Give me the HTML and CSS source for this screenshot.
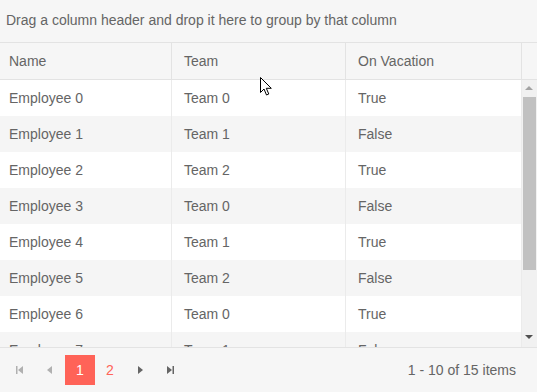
FILE: index.html
```html
<!DOCTYPE html>
<html lang="en">
<head>
  <meta charset="UTF-8">
  <title>Grid</title>
  <link rel="stylesheet" href="styles.css">
</head>
<body>
  <div class="grid">
    <div class="group-hint">Drag a column header and drop it here to group by that column</div>
    <div class="head">
      <div class="cell first">Name</div>
      <div class="cell">Team</div>
      <div class="cell">On Vacation</div>
      <div class="gutter"></div>
    </div>
    <div class="body">
      <div class="rows">
        <div class="row"><div class="cell first">Employee 0</div><div class="cell">Team 0</div><div class="cell">True</div></div>
        <div class="row alt"><div class="cell first">Employee 1</div><div class="cell">Team 1</div><div class="cell">False</div></div>
        <div class="row"><div class="cell first">Employee 2</div><div class="cell">Team 2</div><div class="cell">True</div></div>
        <div class="row alt"><div class="cell first">Employee 3</div><div class="cell">Team 0</div><div class="cell">False</div></div>
        <div class="row"><div class="cell first">Employee 4</div><div class="cell">Team 1</div><div class="cell">True</div></div>
        <div class="row alt"><div class="cell first">Employee 5</div><div class="cell">Team 2</div><div class="cell">False</div></div>
        <div class="row"><div class="cell first">Employee 6</div><div class="cell">Team 0</div><div class="cell">True</div></div>
        <div class="row alt"><div class="cell first">Employee 7</div><div class="cell">Team 1</div><div class="cell">False</div></div>
      </div>
      <div class="scrollbar">
        <div class="arrow up"></div>
        <div class="thumb"></div>
        <div class="track"></div>
        <div class="arrow down"></div>
      </div>
    </div>
    <div class="pager">
      <span class="pbtn off">
        <svg width="16" height="16" viewBox="0 0 16 16"><rect x="4" y="4" width="1.5" height="8"/><path d="M11 4 L6 8 L11 12 Z"/></svg>
      </span>
      <span class="pbtn off">
        <svg width="16" height="16" viewBox="0 0 16 16"><path d="M10 4 L5 8 L10 12 Z"/></svg>
      </span>
      <span class="pbtn page current">1</span>
      <span class="pbtn page">2</span>
      <span class="pbtn">
        <svg width="16" height="16" viewBox="0 0 16 16"><path d="M6 4 L11 8 L6 12 Z"/></svg>
      </span>
      <span class="pbtn">
        <svg width="16" height="16" viewBox="0 0 16 16"><path d="M5 4 L10 8 L5 12 Z"/><rect x="10.5" y="4" width="1.5" height="8"/></svg>
      </span>
      <span class="info">1 - 10 of 15 items</span>
    </div>
    <svg class="cursor" width="13" height="20" viewBox="0 0 13 20"><path d="M0.5 0.5 L0.5 15.5 L4 12 L6.5 18 L8.8 17 L6.3 11.3 L11.3 11.3 Z" fill="#fff" stroke="#000" stroke-width="1"/></svg>
  </div>
</body>
</html>
```

FILE: styles.css
```css
body { margin: 0; font-family: "Liberation Sans", Arial, sans-serif; font-size: 14px; color: #656565; background: #fff; }
.grid { position: relative; width: 537px; height: 392px; overflow: hidden; }
.group-hint { height: 42px; line-height: 40px; padding-left: 6px; background: #f6f6f6; border-bottom: 1px solid #e3e3e3; }
.head { display: grid; grid-template-columns: 172px 174px 176px 1fr; height: 36px; background: #f6f6f6; border-bottom: 1px solid #e3e3e3; }
.cell { padding: 8px 12px; line-height: 20px; border-right: 1px solid #e3e3e3; white-space: nowrap; overflow: hidden; }
.cell.first { padding-left: 9px; }
.body { display: flex; height: 267px; }
.rows { width: 522px; overflow: hidden; }
.row { display: grid; grid-template-columns: 172px 174px 176px; height: 36px; background: #fff; }
.row.alt { background: #f5f5f5; }
.row .cell { border-right-color: #ebebeb; }
.scrollbar { flex: 1; display: flex; flex-direction: column; background: #f1f1f1; }
.arrow { height: 17px; position: relative; }
.arrow::after { content: ""; position: absolute; left: 3px; border-left: 4px solid transparent; border-right: 4px solid transparent; }
.arrow.up::after { top: 6px; border-bottom: 4px solid #a3a3a3; }
.arrow.down::after { bottom: 8px; border-top: 4px solid #505050; }
.thumb { height: 173px; margin: 0 1px 0 1px; background: #c1c1c1; }
.track { flex: 1; }
.pager { display: flex; align-items: center; height: 44px; padding: 0 5px; background: #f6f6f6; border-top: 1px solid #e3e3e3; }
.pbtn { width: 30px; height: 30px; display: flex; align-items: center; justify-content: center; fill: #656565; }
.pbtn.off { fill: #b0b0b0; }
.page { color: #ff6358; font-size: 14px; }
.page.current { background: #ff6358; color: #fff; }
.info { margin-left: auto; padding-right: 16px; }
.cursor { position: absolute; left: 260px; top: 77px; }
```
